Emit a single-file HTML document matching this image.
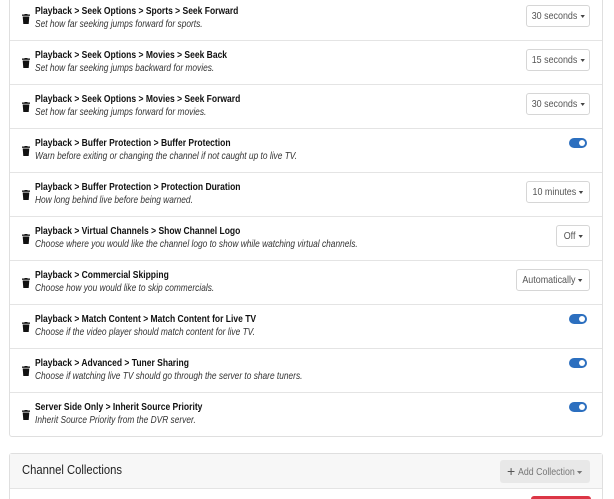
<!DOCTYPE html>
<html><head><style>
*{box-sizing:border-box;margin:0;padding:0}
html,body{width:614px;height:499px;overflow:hidden}
body{background:#fff;font-family:"Liberation Sans",Arial,sans-serif;color:#212529;position:relative}
.card{position:absolute;left:9px;top:-4px;width:594px;height:441px;border:1px solid #dfdfdf;border-radius:3px}
.row{position:absolute;left:0;width:592px;height:44px;border-bottom:1px solid #e4e4e4}
.row:last-child{border-bottom:none}
.ic{position:absolute;left:12px;top:17px;width:8px;height:10px}
.t{position:absolute;left:25px;top:9px;white-space:nowrap;transform:scaleX(.82);transform-origin:left}
.t b{display:block;font-size:10.4px;line-height:12px;color:#111}
.t i{display:block;font-size:10.2px;line-height:13px;color:#333}
.dd{position:absolute;right:12px;top:8px;height:22px;border:1px solid #d6d6d6;border-radius:3px;font-size:10.5px;line-height:20px;color:#555;white-space:nowrap;text-align:center}
.dd span{display:inline-block;transform:scaleX(.85)}
.car{display:inline-block;margin-left:3px;border-left:3px solid transparent;border-right:3px solid transparent;border-top:3px solid #444;vertical-align:middle}
.tg{position:absolute;left:559px;top:9px;width:18px;height:10px;border-radius:5px;background:#2c6fbf}
.tg:after{content:"";position:absolute;right:2px;top:2px;width:6px;height:6px;border-radius:50%;background:#fff}
.c2{position:absolute;left:9px;top:453px;width:594px;height:60px;border:1px solid #dfdfdf;border-radius:3px}
.h{height:35px;background:#f7f7f7;border-bottom:1px solid #e4e4e4;position:relative}
.h .n{position:absolute;left:12px;top:9px;font-size:12.5px;color:#222;transform:scaleX(.9);transform-origin:left;white-space:nowrap}
.ab{position:absolute;left:490px;top:6px;width:90px;height:23px;background:#e8e8e8;border-radius:3px;font-size:10px;color:#777;line-height:23px;padding-left:7px;white-space:nowrap}
.ab span.l{display:inline-block;transform:scaleX(.88);transform-origin:left}
.red{position:absolute;left:521px;top:42px;width:60px;height:20px;background:#dc3545;border-radius:3px}
</style></head><body>
<div class="card">
<svg width="0" height="0" style="position:absolute"><defs><symbol id="tr" viewBox="0 0 8 10"><rect x="0" y="0.5" width="8" height="1.3" fill="#111"/><rect x="2.5" y="0" width="3" height="1" fill="#111"/><path d="M0.7 2.5H7.3L6.7 10H1.3Z" fill="#111"/></symbol></defs></svg>

<div class="row" style="top:0"><svg class="ic"><use href="#tr"/></svg><div class="t"><b>Playback &gt; Seek Options &gt; Sports &gt; Seek Forward</b><i>Set how far seeking jumps forward for sports.</i></div><div class="dd" style="width:64px"><span>30 seconds<span class="car"></span></span></div></div>
<div class="row" style="top:44px"><svg class="ic"><use href="#tr"/></svg><div class="t"><b>Playback &gt; Seek Options &gt; Movies &gt; Seek Back</b><i>Set how far seeking jumps backward for movies.</i></div><div class="dd" style="width:64px"><span>15 seconds<span class="car"></span></span></div></div>
<div class="row" style="top:88px"><svg class="ic"><use href="#tr"/></svg><div class="t"><b>Playback &gt; Seek Options &gt; Movies &gt; Seek Forward</b><i>Set how far seeking jumps forward for movies.</i></div><div class="dd" style="width:64px"><span>30 seconds<span class="car"></span></span></div></div>
<div class="row" style="top:132px"><svg class="ic"><use href="#tr"/></svg><div class="t"><b>Playback &gt; Buffer Protection &gt; Buffer Protection</b><i>Warn before exiting or changing the channel if not caught up to live TV.</i></div><div class="tg"></div></div>
<div class="row" style="top:176px"><svg class="ic"><use href="#tr"/></svg><div class="t"><b>Playback &gt; Buffer Protection &gt; Protection Duration</b><i>How long behind live before being warned.</i></div><div class="dd" style="width:64px"><span>10 minutes<span class="car"></span></span></div></div>
<div class="row" style="top:220px"><svg class="ic"><use href="#tr"/></svg><div class="t"><b>Playback &gt; Virtual Channels &gt; Show Channel Logo</b><i>Choose where you would like the channel logo to show while watching virtual channels.</i></div><div class="dd" style="width:34px"><span>Off<span class="car"></span></span></div></div>
<div class="row" style="top:264px"><svg class="ic"><use href="#tr"/></svg><div class="t"><b>Playback &gt; Commercial Skipping</b><i>Choose how you would like to skip commercials.</i></div><div class="dd" style="width:74px"><span>Automatically<span class="car"></span></span></div></div>
<div class="row" style="top:308px"><svg class="ic"><use href="#tr"/></svg><div class="t"><b>Playback &gt; Match Content &gt; Match Content for Live TV</b><i>Choose if the video player should match content for live TV.</i></div><div class="tg"></div></div>
<div class="row" style="top:352px"><svg class="ic"><use href="#tr"/></svg><div class="t"><b>Playback &gt; Advanced &gt; Tuner Sharing</b><i>Choose if watching live TV should go through the server to share tuners.</i></div><div class="tg"></div></div>
<div class="row" style="top:396px"><svg class="ic"><use href="#tr"/></svg><div class="t"><b>Server Side Only &gt; Inherit Source Priority</b><i>Inherit Source Priority from the DVR server.</i></div><div class="tg"></div></div>
</div>
<div class="c2"><div class="h"><div class="n">Channel Collections</div><div class="ab"><span style="font-size:14px;color:#555;vertical-align:-1px">+</span> <span class="l">Add Collection<span class="car" style="border-top-color:#777"></span></span></div></div><div class="red"></div></div>
</body></html>
